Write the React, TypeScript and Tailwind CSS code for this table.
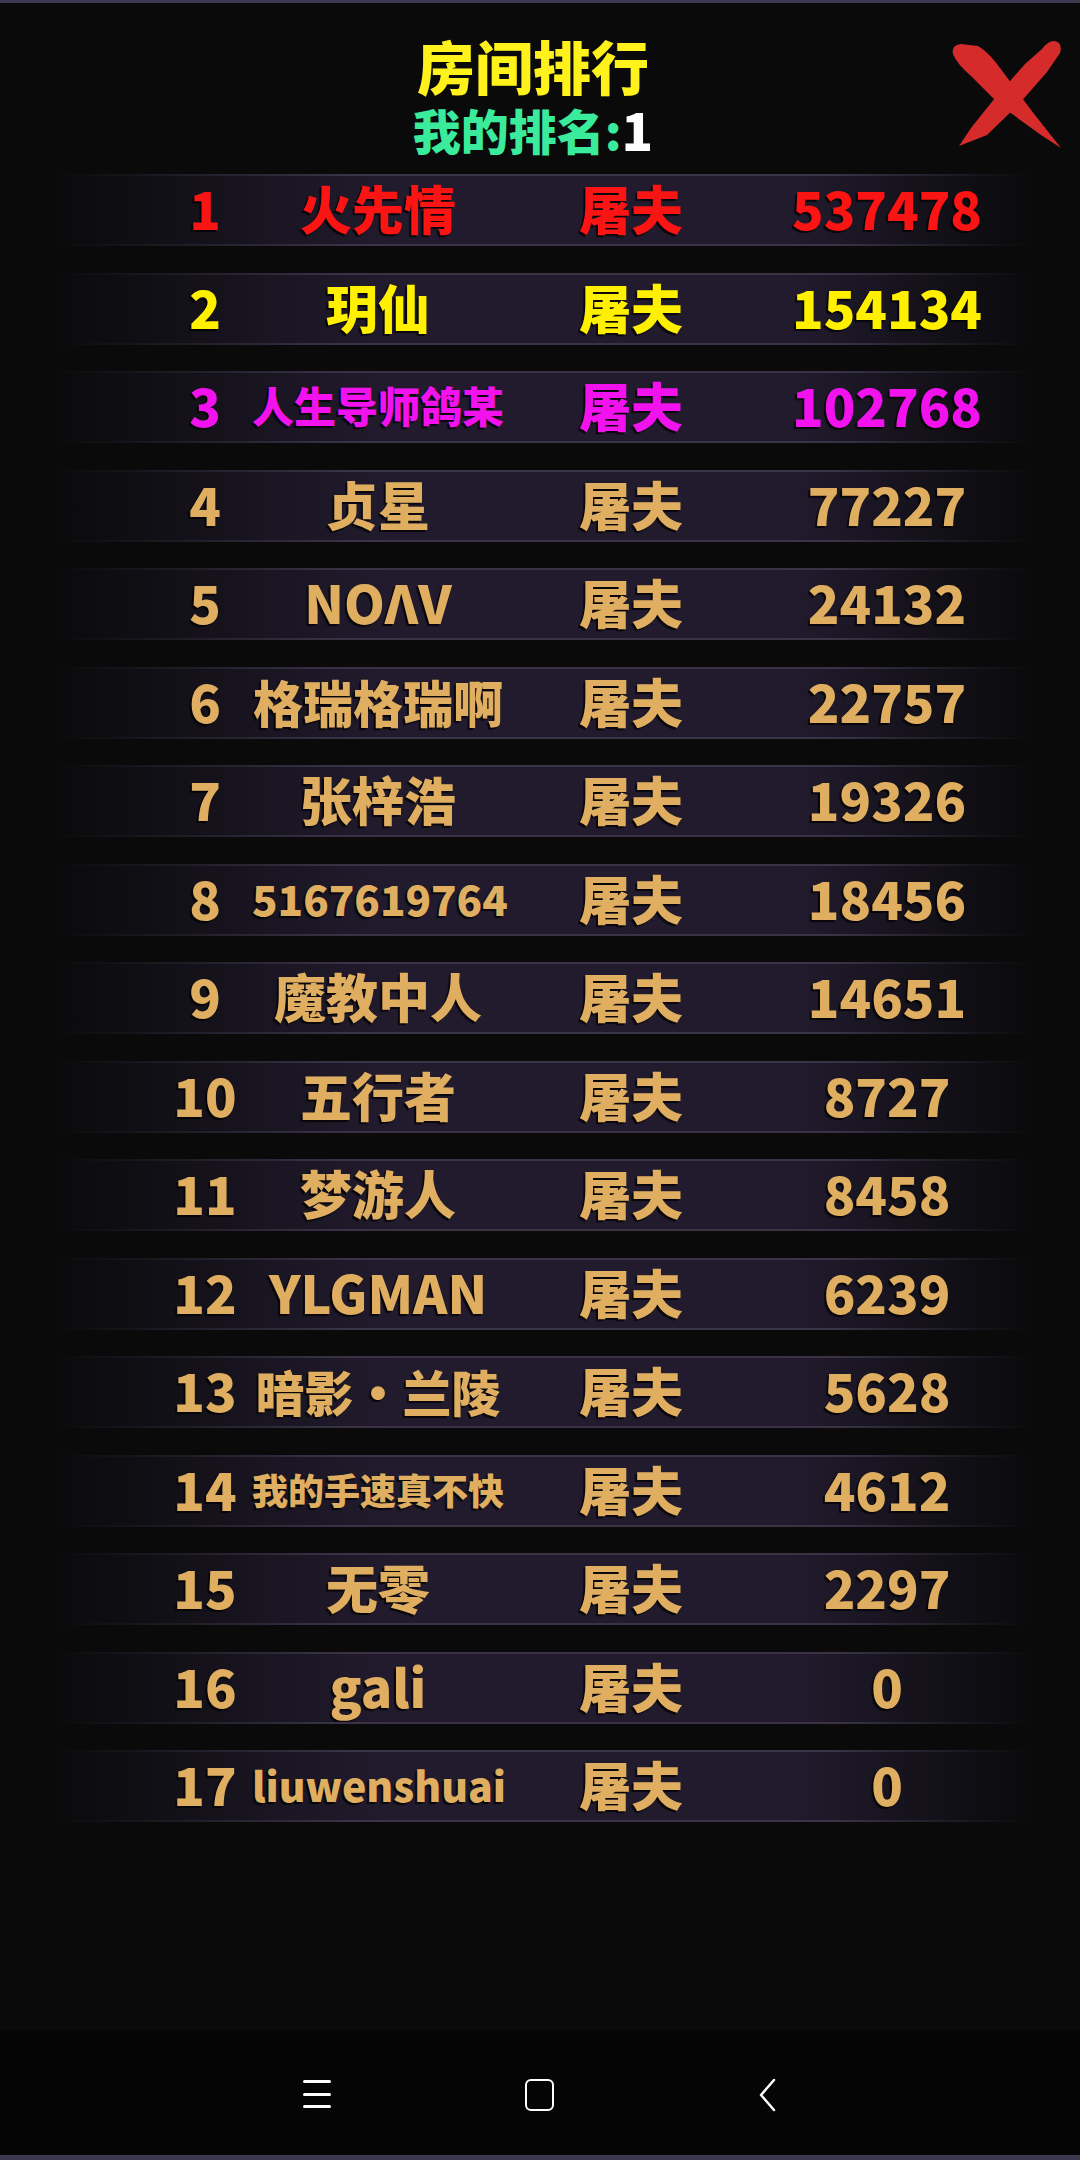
type Entry = {
  rank: number
  name: string
  nameSize: string
  score: string
}

const entries: Entry[] = [
  { rank: 1, name: '火先情', nameSize: 'text-[52px]', score: '537478' },
  { rank: 2, name: '玥仙', nameSize: 'text-[52px]', score: '154134' },
  { rank: 3, name: '人生导师鸽某', nameSize: 'text-[42px]', score: '102768' },
  { rank: 4, name: '贞星', nameSize: 'text-[52px]', score: '77227' },
  { rank: 5, name: 'NOΛV', nameSize: 'text-[52px]', score: '24132' },
  { rank: 6, name: '格瑞格瑞啊', nameSize: 'text-[50px]', score: '22757' },
  { rank: 7, name: '张梓浩', nameSize: 'text-[52px]', score: '19326' },
  { rank: 8, name: '5167619764', nameSize: 'text-[42px]', score: '18456' },
  { rank: 9, name: '魔教中人', nameSize: 'text-[52px]', score: '14651' },
  { rank: 10, name: '五行者', nameSize: 'text-[52px]', score: '8727' },
  { rank: 11, name: '梦游人', nameSize: 'text-[52px]', score: '8458' },
  { rank: 12, name: 'YLGMAN', nameSize: 'text-[52px]', score: '6239' },
  { rank: 13, name: '暗影·兰陵', nameSize: 'text-[49px]', score: '5628' },
  { rank: 14, name: '我的手速真不快', nameSize: 'text-[36px]', score: '4612' },
  { rank: 15, name: '无零', nameSize: 'text-[52px]', score: '2297' },
  { rank: 16, name: 'gali', nameSize: 'text-[52px]', score: '0' },
  { rank: 17, name: 'liuwenshuai', nameSize: 'text-[41px]', score: '0' },
]

// top three get their own colours, the rest are gold
const rowColor = (rank: number) => {
  if (rank === 1) return 'text-[#fa1414]'
  if (rank === 2) return 'text-[#fff000]'
  if (rank === 3) return 'text-[#f212ee]'
  return 'text-[#dfae60]'
}

const CloseX = () => (
  <svg width="112" height="110" viewBox="0 0 112 110" className="block">
    <path
      d="M2 14 Q0 5 10 4 L27 6 Q38 12 52 32 L80 70 L110 108 L90 95 L50 66 L20 36 Q6 24 2 14 Z"
      fill="#d52b2b"
    />
    <path
      d="M103 1 Q112 2 109 13 L96 32 L68 64 L36 95 L8 106 L20 88 L44 58 L74 24 L91 9 Q97 1 103 1 Z"
      fill="#d52b2b"
    />
  </svg>
)

const Row = ({ e }: { e: Entry }) => {
  return (
    <div className="ml-[52px] w-[980px] h-[72px] flex flex-col">
      <div className="h-[2px] bg-[linear-gradient(to_right,transparent,#3a3348_30%,#3a3348_80%,transparent)]" />
      <div
        className={`flex-1 flex items-center pl-[106px] font-black leading-none [text-shadow:-2px_2px_1px_rgba(0,0,0,0.75)] bg-[linear-gradient(to_right,transparent,#221b2e_35%,#221b2e_75%,transparent)] ${rowColor(e.rank)}`}
      >
        <div className="w-[94px] text-center text-[52px] -mt-1">{e.rank}</div>
        <div className={`w-[252px] text-center whitespace-nowrap -mt-1 ${e.nameSize}`}>{e.name}</div>
        <div className="w-[254px] text-center text-[52px] -mt-1">屠夫</div>
        <div className="w-[258px] text-center text-[52px] -mt-1">{e.score}</div>
      </div>
      <div className="h-[2px] bg-[linear-gradient(to_right,transparent,#3a3348_30%,#3a3348_80%,transparent)]" />
    </div>
  )
}

export default function App() {
  return (
    <div className="w-[1080px] h-[2160px] bg-[#0a0a0b] flex flex-col font-['Noto_Sans_CJK_SC','Noto_Sans',sans-serif] overflow-hidden">
      <div className="h-[3px] bg-[#3d3850]" />

      {/* Header */}
      <div className="relative flex flex-col items-center pt-[33px] pr-[14px]">
        <div className="text-[58px] leading-none font-black text-[#fff21c]">房间排行</div>
        <div className="mt-[12px] h-[46px] flex items-center text-[48px] leading-none font-black text-[#3aeb9c]">
          <span>我的排名:</span>
          <span className="text-white text-[52px]">1</span>
        </div>
        <div className="absolute right-[17px] top-[37px]">
          <CloseX />
        </div>
      </div>

      {/* Ranking list */}
      <div className="mt-[22px] flex flex-col gap-[26.5px]">
        {entries.map((e) => (
          <Row key={e.rank} e={e} />
        ))}
      </div>

      <div className="flex-1" />

      {/* Android nav bar */}
      <div className="h-[125px] bg-[#050505] relative">
        <div className="absolute left-[303px] top-[50px] w-[28px] flex flex-col gap-[9.5px]">
          <div className="h-[3px] bg-white rounded-full" />
          <div className="h-[3px] bg-white rounded-full" />
          <div className="h-[3px] bg-white rounded-full" />
        </div>
        <div className="absolute left-[525px] top-[49px] w-[29px] h-[32px] border-[2.5px] border-white rounded-[6px]" />
        <svg className="absolute left-[755px] top-[48px]" width="24" height="34" viewBox="0 0 24 34">
          <path d="M19 2 L6 17 L19 32" stroke="white" strokeWidth="2.5" fill="none" strokeLinecap="round" strokeLinejoin="round" />
        </svg>
      </div>
      <div className="h-[5px] bg-[#3d3850]" />
    </div>
  )
}
